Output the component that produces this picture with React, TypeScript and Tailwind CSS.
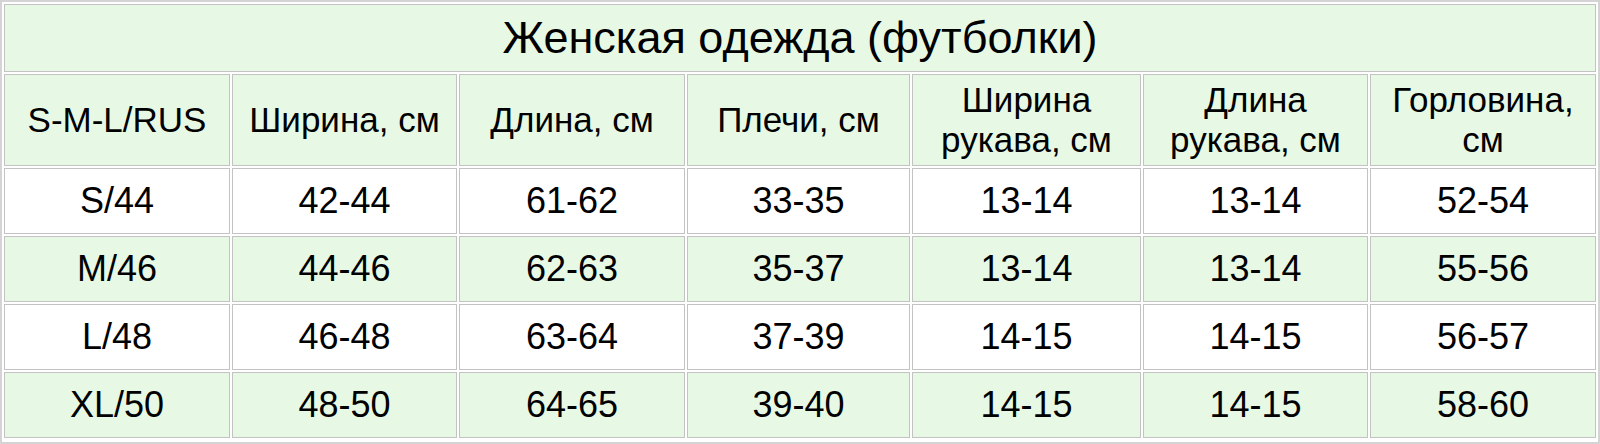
import React from "react";

const widths = [226, 225, 226, 223, 229, 225, 226];

const headers: React.ReactNode[] = [
  "S-M-L/RUS",
  "Ширина, см",
  "Длина, см",
  "Плечи, см",
  <>Ширина<br />рукава, см</>,
  <>Длина<br />рукава, см</>,
  <>Горловина,<br />см</>,
];

const rows = [
  ["S/44", "42-44", "61-62", "33-35", "13-14", "13-14", "52-54"],
  ["M/46", "44-46", "62-63", "35-37", "13-14", "13-14", "55-56"],
  ["L/48", "46-48", "63-64", "37-39", "14-15", "14-15", "56-57"],
  ["XL/50", "48-50", "64-65", "39-40", "14-15", "14-15", "58-60"],
];

const Cell: React.FC<{ w: number; green?: boolean; children: React.ReactNode }> = ({ w, green, children }) => (
  <div
    className={`flex items-center justify-center text-center border border-[#c3c3c3] leading-[40px] ${green ? "bg-[#e7f9e5]" : "bg-white"}`}
    style={{ width: w }}
  >
    {children}
  </div>
);

export default function App() {
  return (
    <div className="w-[1600px] h-[444px] bg-white font-['Liberation_Sans',Arial,sans-serif] text-black">
      <div className="h-full border-2 border-[#d4d4d4] p-[2px] flex flex-col gap-[2px]">
        <div className="h-[68px] flex items-center justify-center border border-[#c3c3c3] bg-[#e7f9e5] text-[45px]">
          Женская одежда (футболки)
        </div>
        <div className="h-[92px] flex gap-[2px] text-[35px]">
          {headers.map((h, i) => (
            <Cell key={i} w={widths[i]} green>
              <span>{h}</span>
            </Cell>
          ))}
        </div>
        {rows.map((r, ri) => (
          <div key={ri} className="h-[66px] flex gap-[2px] text-[36px]">
            {r.map((v, i) => (
              <Cell key={i} w={widths[i]} green={ri % 2 === 1}>
                {v}
              </Cell>
            ))}
          </div>
        ))}
      </div>
    </div>
  );
}
